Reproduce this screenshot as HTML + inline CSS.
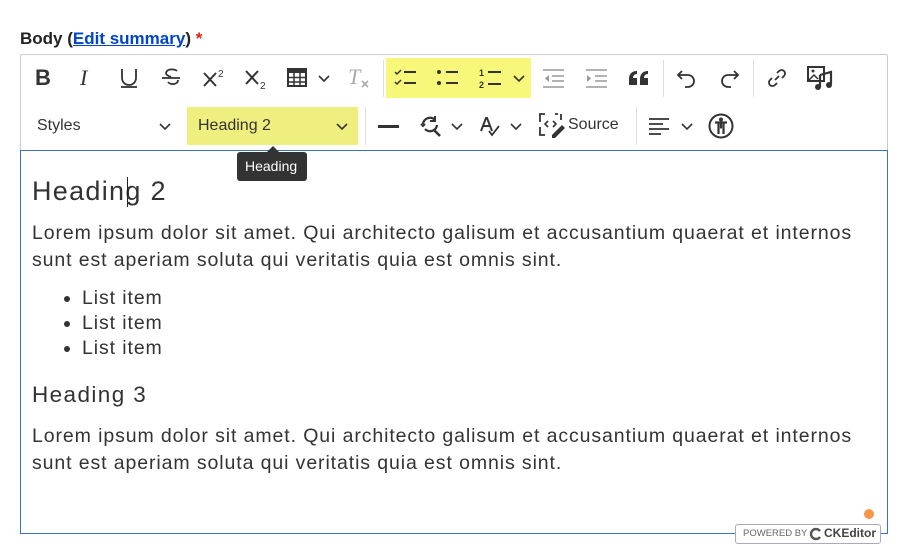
<!DOCTYPE html>
<html><head><meta charset="utf-8"><style>
*{margin:0;padding:0;box-sizing:border-box}
body{width:916px;height:544px;background:#fff;font-family:"Liberation Sans",sans-serif;position:relative;overflow:hidden;color:#333}
.a{position:absolute}
.t{position:absolute;white-space:nowrap}
svg.i{position:absolute;overflow:visible}
.c{font-size:19.5px;color:#333;letter-spacing:0.9px}
</style></head><body>
<div class="t" style="left:20px;top:29px;font-size:17px;font-weight:bold;color:#222">Body (<span style="color:#0044cc;text-decoration:underline">Edit summary</span>)<span style="color:#d21">&nbsp;*</span></div>

<div class="a" style="left:20px;top:54px;width:868px;height:97px;border:1px solid #ccc;border-bottom:none;border-radius:2px 2px 0 0"></div>
<div class="a" style="left:386px;top:58px;width:145px;height:40px;background:#f7f77a"></div>
<div class="a" style="left:187px;top:107px;width:171px;height:38px;background:#efef7f"></div>
<div class="a" style="left:383px;top:60px;width:1px;height:37px;background:#ddd"></div>
<div class="a" style="left:663px;top:60px;width:1px;height:37px;background:#ddd"></div>
<div class="a" style="left:753px;top:60px;width:1px;height:37px;background:#ddd"></div>
<div class="a" style="left:365px;top:107px;width:1px;height:38px;background:#ddd"></div>
<div class="a" style="left:636px;top:107px;width:1px;height:38px;background:#ddd"></div>

<!-- row1 -->
<div class="t" style="left:35px;top:65px;font-size:22px;font-weight:bold">B</div>
<div class="t" style="left:80px;top:65px;font-size:22px;font-family:'Liberation Serif',serif;font-style:italic">I</div>
<svg class="i" style="left:119px;top:67px" width="20" height="22"><path d="M3 2v9a7 7 0 0 0 14 0V2" fill="none" stroke="#333" stroke-width="1.8"/><path d="M2 20h16" stroke="#333" stroke-width="1.8"/></svg>
<svg class="i" style="left:161px;top:67px" width="20" height="22"><path d="M16 4c-2-2-10-3-11 2 0 2 2 3 5 4M7 15c2 3 10 3 10-2" fill="none" stroke="#333" stroke-width="1.8"/><path d="M1 11h18" stroke="#333" stroke-width="1.8"/></svg>
<svg class="i" style="left:202px;top:68px" width="24" height="20"><path d="M2 5l12 13M14 5L2 18" stroke="#333" stroke-width="2"/><text x="16" y="9" font-size="10" font-family="Liberation Sans" fill="#333">2</text></svg>
<svg class="i" style="left:244px;top:68px" width="24" height="22"><path d="M2 3l12 13M14 3L2 16" stroke="#333" stroke-width="2"/><text x="16" y="21" font-size="10" font-family="Liberation Sans" fill="#333">2</text></svg>
<svg class="i" style="left:287px;top:68px" width="20" height="20"><rect x="1" y="1" width="18" height="17" fill="#fff" stroke="#333" stroke-width="2"/><rect x="1" y="1" width="18" height="4" fill="#333"/><path d="M7 5v13M13 5v13M1 9.5h18M1 14h18" stroke="#333" stroke-width="1.5"/></svg>
<svg class="i" style="left:318px;top:75px" width="12" height="8"><path d="M1 1l5 5 5-5" fill="none" stroke="#333" stroke-width="1.6"/></svg>
<div class="t" style="left:348px;top:64px;font-size:22px;font-family:'Liberation Serif',serif;font-style:italic;color:#aaa">T</div>
<svg class="i" style="left:361px;top:80px" width="8" height="8"><path d="M1 1l6 6M7 1L1 7" stroke="#aaa" stroke-width="1.6"/></svg>
<svg class="i" style="left:394px;top:68px" width="24" height="20"><path d="M1 4l2 2 4-4M1 14l2 2 4-4" fill="none" stroke="#333" stroke-width="1.5"/><path d="M10 4h12M10 15h12" stroke="#333" stroke-width="2"/></svg>
<svg class="i" style="left:436px;top:68px" width="24" height="20"><circle cx="3" cy="4" r="2" fill="#333"/><circle cx="3" cy="15" r="2" fill="#333"/><path d="M10 4h12M10 15h12" stroke="#333" stroke-width="2"/></svg>
<svg class="i" style="left:479px;top:66px" width="24" height="24"><text x="0" y="10" font-size="9" font-weight="bold" font-family="Liberation Sans" fill="#333">1</text><text x="0" y="22" font-size="9" font-weight="bold" font-family="Liberation Sans" fill="#333">2</text><path d="M9 6h13M9 18h13" stroke="#333" stroke-width="2"/></svg>
<svg class="i" style="left:513px;top:75px" width="12" height="8"><path d="M1 1l5 5 5-5" fill="none" stroke="#333" stroke-width="1.6"/></svg>
<svg class="i" style="left:542px;top:68px" width="24" height="20"><path d="M1 2h21M10 8h12M10 13h12M1 19h21" stroke="#999" stroke-width="1.6"/><path d="M7 7l-4 3.5 4 3.5z" fill="#999"/></svg>
<svg class="i" style="left:585px;top:68px" width="24" height="20"><path d="M1 2h21M10 8h12M10 13h12M1 19h21" stroke="#999" stroke-width="1.6"/><path d="M2 7l4 3.5-4 3.5z" fill="#999"/></svg>
<svg class="i" style="left:628px;top:70px" width="22" height="16"><path d="M1 15V9c0-5 3-8 8-8v3c-3 0-4 2-4 4h4v7zM12 15V9c0-5 3-8 8-8v3c-3 0-4 2-4 4h4v7z" fill="#333"/></svg>
<svg class="i" style="left:676px;top:69px" width="22" height="20"><path d="M6 2L2 6l4 4M2 6h10a6 6 0 0 1 0 12H9" fill="none" stroke="#333" stroke-width="1.8"/></svg>
<svg class="i" style="left:718px;top:69px" width="22" height="20"><path d="M16 2l4 4-4 4M20 6H10a6 6 0 0 0 0 12h3" fill="none" stroke="#333" stroke-width="1.8"/></svg>
<svg class="i" style="left:767px;top:68px" width="20" height="20"><path d="M8 12l4-4M10 5l2-2a3.5 3.5 0 0 1 5 5l-2 2M10 15l-2 2a3.5 3.5 0 0 1-5-5l2-2" fill="none" stroke="#333" stroke-width="1.8"/></svg>
<svg class="i" style="left:807px;top:66px" width="28" height="26"><rect x="1" y="1" width="16" height="14" fill="none" stroke="#333" stroke-width="2"/><circle cx="6" cy="5" r="1.5" fill="#333"/><path d="M2 14l5-5 4 4" fill="none" stroke="#333" stroke-width="1.5"/><path d="M13 9l11-3v12M13 9v12" stroke="#333" stroke-width="2.2" fill="none"/><circle cx="11" cy="21" r="3" fill="#333"/><circle cx="22" cy="19" r="3" fill="#333"/></svg>

<!-- row2 -->
<div class="t" style="left:37px;top:117px;font-size:16px">Styles</div>
<svg class="i" style="left:159px;top:123px" width="12" height="8"><path d="M1 1l5 5 5-5" fill="none" stroke="#333" stroke-width="1.6"/></svg>
<div class="t" style="left:198px;top:117px;font-size:16px">Heading 2</div>
<svg class="i" style="left:336px;top:123px" width="12" height="8"><path d="M1 1l5 5 5-5" fill="none" stroke="#333" stroke-width="1.6"/></svg>
<div class="a" style="left:378px;top:125px;width:21px;height:3px;background:#333"></div>
<svg class="i" style="left:419px;top:115px" width="24" height="22"><path d="M4 9a7 7 0 0 1 12-4M18 10a7 7 0 0 1-12 4" fill="none" stroke="#333" stroke-width="2.2"/><path d="M16 1v5h-5M2 9l2 2 2-2" fill="none" stroke="#333" stroke-width="2"/><path d="M15 15l6 6" stroke="#333" stroke-width="2.6"/></svg>
<svg class="i" style="left:451px;top:123px" width="12" height="8"><path d="M1 1l5 5 5-5" fill="none" stroke="#333" stroke-width="1.6"/></svg>
<svg class="i" style="left:480px;top:116px" width="20" height="22"><path d="M1 15L6 2h1l5 13M3 10h7" fill="none" stroke="#333" stroke-width="2"/><path d="M9 15l3 4 7-9" fill="none" stroke="#333" stroke-width="1.8"/></svg>
<svg class="i" style="left:510px;top:123px" width="12" height="8"><path d="M1 1l5 5 5-5" fill="none" stroke="#333" stroke-width="1.6"/></svg>
<svg class="i" style="left:539px;top:113px" width="28" height="26"><path d="M6 1H1v8M1 14v8h5M19 1h-3M22 1v6" fill="none" stroke="#333" stroke-width="1.8"/><path d="M9 8l-3 3 3 3M14 8l3 3-3 3" fill="none" stroke="#333" stroke-width="1.6"/><path d="M13 22l10-10 3 3-10 10h-3z" fill="#333"/></svg>
<div class="t" style="left:568px;top:116px;font-size:16px">Source</div>
<svg class="i" style="left:649px;top:117px" width="20" height="18"><path d="M0 2h20M0 7h14M0 12h20M0 17h12" stroke="#333" stroke-width="1.8"/></svg>
<svg class="i" style="left:681px;top:123px" width="12" height="8"><path d="M1 1l5 5 5-5" fill="none" stroke="#333" stroke-width="1.6"/></svg>
<svg class="i" style="left:708px;top:113px" width="26" height="26"><circle cx="13" cy="13" r="11.5" fill="none" stroke="#333" stroke-width="2"/><circle cx="13" cy="6.5" r="2" fill="#333"/><path d="M7 9.5h12M13 9.5v6M10.5 10v11M15.5 10v11" stroke="#333" stroke-width="2.2"/></svg>

<!-- editable -->
<div class="a" style="left:20px;top:150px;width:868px;height:384px;border:1px solid #3a73c4"></div>
<div class="a" style="left:237px;top:152px;width:70px;height:29px;background:#333;border-radius:3px"></div>
<div class="a" style="left:267px;top:146px;width:0;height:0;border:6px solid transparent;border-bottom-color:#333;border-top:none"></div>
<div class="t" style="left:245px;top:158px;font-size:14px;color:#fff">Heading</div>

<div class="t" style="left:32px;top:176px;font-size:27px;color:#333;letter-spacing:1.3px">Heading 2</div>
<div class="a" style="left:127px;top:177px;width:1px;height:30px;background:#222"></div>
<div class="t c" style="left:32px;top:222px">Lorem ipsum dolor sit amet. Qui architecto galisum et accusantium quaerat et internos</div>
<div class="t c" style="left:32px;top:249px">sunt est aperiam soluta qui veritatis quia est omnis sint.</div>
<div class="a" style="left:64px;top:296px;width:6px;height:6px;border-radius:50%;background:#333"></div>
<div class="a" style="left:64px;top:321px;width:6px;height:6px;border-radius:50%;background:#333"></div>
<div class="a" style="left:64px;top:346px;width:6px;height:6px;border-radius:50%;background:#333"></div>
<div class="t c" style="left:82px;top:287px">List item</div>
<div class="t c" style="left:82px;top:312px">List item</div>
<div class="t c" style="left:82px;top:337px">List item</div>
<div class="t" style="left:32px;top:382px;font-size:22.5px;color:#333;letter-spacing:1.4px">Heading 3</div>
<div class="t c" style="left:32px;top:425px">Lorem ipsum dolor sit amet. Qui architecto galisum et accusantium quaerat et internos</div>
<div class="t c" style="left:32px;top:452px">sunt est aperiam soluta qui veritatis quia est omnis sint.</div>

<div class="a" style="left:864px;top:509px;width:10px;height:10px;border-radius:50%;background:#f5964a"></div>
<div class="a" style="left:735px;top:524px;width:146px;height:20px;background:#fff;border:1px solid #aab;border-radius:3px"></div>
<div class="t" style="left:743px;top:528px;font-size:9.5px;color:#666">POWERED BY</div>
<svg class="i" style="left:810px;top:528px" width="12" height="12"><path d="M10 3A5 5 0 1 0 10 9" fill="none" stroke="#555" stroke-width="2.4"/></svg>
<div class="t" style="left:824px;top:526px;font-size:12px;font-weight:bold;color:#444">CKEditor</div>
</body></html>
